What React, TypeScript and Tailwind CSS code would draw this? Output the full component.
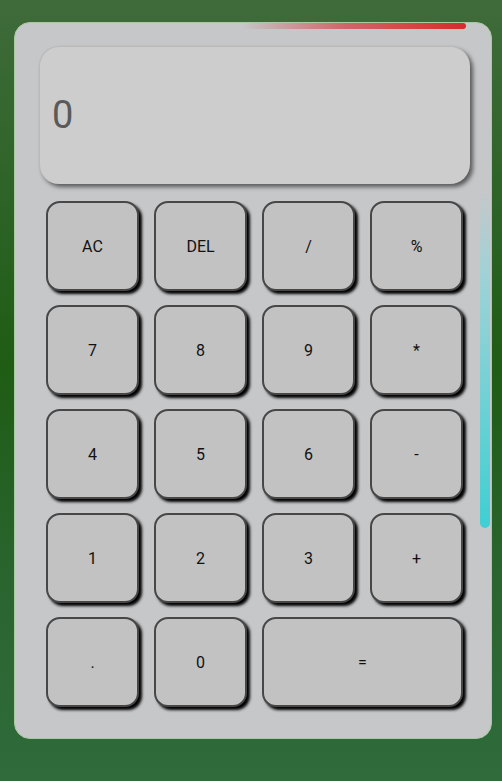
import React from "react";

const keys: { label: string; wide?: boolean }[] = [
  { label: "AC" }, { label: "DEL" }, { label: "/" }, { label: "%" },
  { label: "7" }, { label: "8" }, { label: "9" }, { label: "*" },
  { label: "4" }, { label: "5" }, { label: "6" }, { label: "-" },
  { label: "1" }, { label: "2" }, { label: "3" }, { label: "+" },
  { label: "." }, { label: "0" }, { label: "=", wide: true },
];

export default function App() {
  return (
    <div
      className="w-[502px] h-[781px] bg-[linear-gradient(180deg,#3f6b3a_0%,#2a6223_30%,#1f5c14_47%,#2a6530_75%,#2f6b3b_100%)] pt-[22px] pl-[14px]"
      style={{ fontFamily: "Roboto, 'Liberation Sans', sans-serif" }}
    >
      <div className="relative w-[478px] overflow-hidden rounded-[16px] bg-[#c6c7c9] border border-[#a9c9a0] pt-[23px] pl-[24px] pr-[21px] pb-[31px]">
        <span className="absolute top-0 left-[226px] w-[225px] h-[6px] rounded-full bg-[linear-gradient(90deg,rgba(214,43,47,0)_0%,#d0676b_45%,#d62b2f_100%)]" />
        <span className="absolute top-[168px] right-[1px] w-[10px] h-[337px] rounded-b-full bg-[linear-gradient(180deg,rgba(62,207,211,0)_0%,#9fd2d6_25%,#3fcfd3_100%)]" />
        <div className="h-[138px] rounded-[20px] bg-[#cdcdcd] border-t border-l border-[#b9b9b9] shadow-[3px_3px_4px_rgba(0,0,0,0.55)] flex items-center pl-[12px]">
          <span className="text-[38px] leading-none text-[#5a5a5a] -mt-[2px]">0</span>
        </div>
        <div className="mt-[17px] ml-[7px] w-[417px] grid grid-cols-4 gap-x-[15px] gap-y-[14px]">
          {keys.map((k) => (
            <button
              key={k.label}
              className={`h-[90px] rounded-[14px] bg-[#c2c2c2] border-2 border-[#474747] shadow-[3px_3px_3px_#000] flex items-center justify-center text-[16px] text-[#111] ${k.wide ? "col-span-2" : ""}`}
            >
              <span className="mt-[1px]">{k.label}</span>
            </button>
          ))}
        </div>
      </div>
    </div>
  );
}
